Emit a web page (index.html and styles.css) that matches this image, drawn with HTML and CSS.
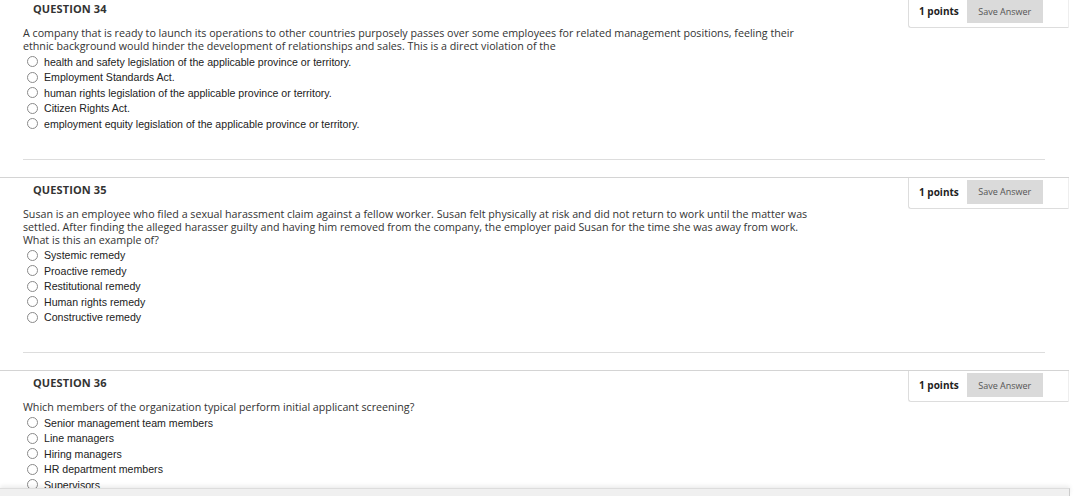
FILE: index.html
```html
<!DOCTYPE html>
<html lang="en">
<head>
<meta charset="utf-8">
<title>Quiz</title>
<link rel="stylesheet" href="styles.css">
</head>
<body>
<div class="page">
  <section class="question">
    <div class="q-header">
      <h3 class="q-title">QUESTION 34</h3>
      <div class="q-points"><span class="pts">1 points</span><button class="save" type="button">Save Answer</button></div>
    </div>
    <div class="q-body">
      <p class="prompt">A company that is ready to launch its operations to other countries purposely passes over some employees for related management positions, feeling their<br>ethnic background would hinder the development of relationships and sales. This is a direct violation of the</p>
      <ul class="options">
        <li><span class="radio"></span>health and safety legislation of the applicable province or territory.</li>
        <li><span class="radio"></span>Employment Standards Act.</li>
        <li><span class="radio"></span>human rights legislation of the applicable province or territory.</li>
        <li><span class="radio"></span>Citizen Rights Act.</li>
        <li><span class="radio"></span>employment equity legislation of the applicable province or territory.</li>
      </ul>
      <hr class="sep">
    </div>
  </section>
  <section class="question">
    <div class="q-header">
      <h3 class="q-title">QUESTION 35</h3>
      <div class="q-points"><span class="pts">1 points</span><button class="save" type="button">Save Answer</button></div>
    </div>
    <div class="q-body">
      <p class="prompt">Susan is an employee who filed a sexual harassment claim against a fellow worker. Susan felt physically at risk and did not return to work until the matter was<br>settled. After finding the alleged harasser guilty and having him removed from the company, the employer paid Susan for the time she was away from work.<br>What is this an example of?</p>
      <ul class="options">
        <li><span class="radio"></span>Systemic remedy</li>
        <li><span class="radio"></span>Proactive remedy</li>
        <li><span class="radio"></span>Restitutional remedy</li>
        <li><span class="radio"></span>Human rights remedy</li>
        <li><span class="radio"></span>Constructive remedy</li>
      </ul>
      <hr class="sep">
    </div>
  </section>
  <section class="question">
    <div class="q-header">
      <h3 class="q-title">QUESTION 36</h3>
      <div class="q-points"><span class="pts">1 points</span><button class="save" type="button">Save Answer</button></div>
    </div>
    <div class="q-body">
      <p class="prompt">Which members of the organization typical perform initial applicant screening?</p>
      <ul class="options">
        <li><span class="radio"></span>Senior management team members</li>
        <li><span class="radio"></span>Line managers</li>
        <li><span class="radio"></span>Hiring managers</li>
        <li><span class="radio"></span>HR department members</li>
        <li><span class="radio"></span>Supervisors</li>
      </ul>
      <hr class="sep">
    </div>
  </section>
</div>
<div class="footer-bar"></div>
</body>
</html>
```

FILE: styles.css
```css
html, body {
  margin: 0;
  padding: 0;
  background: #fff;
}

body {
  font-family: "Open Sans", "Liberation Sans", sans-serif;
  color: #333;
  overflow: hidden;
}

.page {
  width: 1069px;
  margin-top: -4px;
}

.question {
  border-top: 1px solid #d4d4d4;
}

.q-header {
  display: flex;
  justify-content: space-between;
  align-items: flex-start;
  height: 30px;
}

.q-title {
  margin: 0;
  padding: 4px 0 0 33px;
  font-size: 11px;
  line-height: 16px;
  font-weight: 700;
  color: #333;
  letter-spacing: 0.1px;
}

.q-points {
  position: relative;
  z-index: 1;
  display: flex;
  align-items: center;
  gap: 8px;
  padding: 2px 24px 4px 10px;
  border-left: 1px solid #ddd;
  border-bottom: 1px solid #ddd;
  border-right: 1px solid #eee;
  border-bottom-left-radius: 3px;
  background: #fff;
  width: 125px;
}

.pts {
  font-size: 10px;
  font-weight: 700;
  color: #222;
  white-space: nowrap;
}

.save {
  width: 76px;
  height: 24px;
  margin: 0;
  padding: 0;
  border: none;
  background: #dadada;
  color: #555;
  font-family: "Open Sans", "Liberation Sans", sans-serif;
  font-size: 9px;
}

.q-body {
  margin: 0 24px 0 23px;
}

.prompt {
  margin: 0;
  font-size: 10.7px;
  line-height: 13px;
  color: #333;
  white-space: nowrap;
}

.options {
  list-style: none;
  margin: 1px 0 0;
  padding: 0 0 0 4px;
}

.options li {
  display: flex;
  align-items: center;
  height: 15.5px;
  font-family: "Liberation Sans", Arial, sans-serif;
  font-size: 10.6px;
  color: #222;
}

.radio {
  box-sizing: border-box;
  width: 11px;
  height: 11px;
  border: 1px solid #8a8a8a;
  border-radius: 50%;
  background: #fff;
  margin-right: 6px;
  flex: none;
}

.sep {
  margin: 27px 0 17px;
  border: none;
  border-top: 1px solid #ddd;
  height: 0;
}

.footer-bar {
  position: fixed;
  left: 0;
  bottom: 0;
  width: 1069px;
  height: 7px;
  background: #f0f0f0;
  border-top: 1px solid #ddd;
  border-right: 1px solid #ccc;
  box-shadow: 0 -2px 4px rgba(0, 0, 0, 0.08);
}
```
